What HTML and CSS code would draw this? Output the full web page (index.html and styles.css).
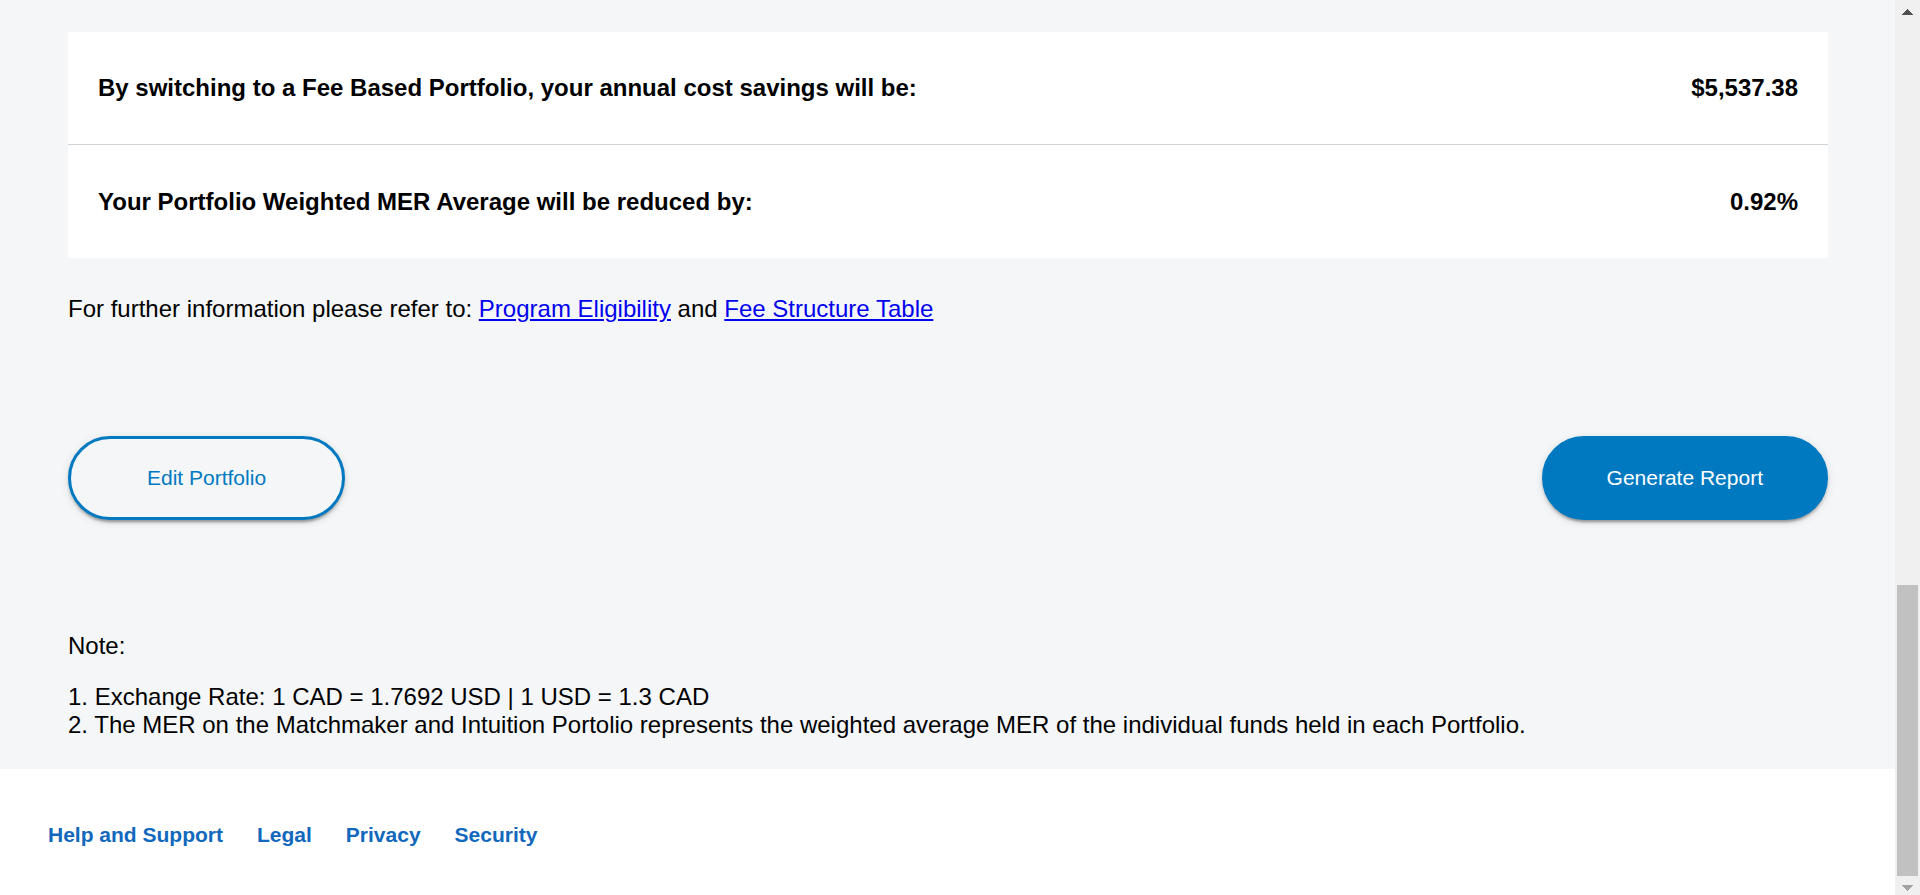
FILE: index.html
```html
<!DOCTYPE html>
<html lang="en">
<head>
<meta charset="utf-8">
<title>Portfolio Fee Comparison</title>
<link rel="stylesheet" href="styles.css">
</head>
<body>
<div class="viewport">
  <div class="page">
    <main class="content">
      <dl class="summary">
        <div class="summary-row">
          <dt>By switching to a Fee Based Portfolio, your annual cost savings will be:</dt>
          <dd>$5,537.38</dd>
        </div>
        <div class="summary-row">
          <dt>Your Portfolio Weighted MER Average will be reduced by:</dt>
          <dd>0.92%</dd>
        </div>
      </dl>
      <p class="info">For further information please refer to: <a href="#eligibility">Program Eligibility</a> and <a href="#fees">Fee Structure Table</a></p>
      <div class="actions">
        <button type="button" class="btn btn-outline">Edit Portfolio</button>
        <button type="button" class="btn btn-primary">Generate Report</button>
      </div>
      <section class="notes">
        <p>Note:</p>
        <p>1. Exchange Rate: 1 CAD = 1.7692 USD | 1 USD = 1.3 CAD<br>2. The MER on the Matchmaker and Intuition Portolio represents the weighted average MER of the individual funds held in each Portfolio.</p>
      </section>
    </main>
    <footer class="footer">
      <nav class="footer-nav">
        <a href="#help">Help and Support</a>
        <a href="#legal">Legal</a>
        <a href="#privacy">Privacy</a>
        <a href="#security">Security</a>
      </nav>
    </footer>
  </div>
  <div class="scrollbar" aria-hidden="true">
    <svg class="arrow arrow-up" viewBox="0 0 11 6" shape-rendering="crispEdges"><path d="M5 0h1v1h1v1h1v1h1v1h1v1h1v1H0V5h1V4h1V3h1V2h1V1h1z"/></svg>
    <div class="track"><div class="thumb"></div></div>
    <svg class="arrow arrow-down" viewBox="0 0 11 6" shape-rendering="crispEdges"><path d="M0 0h11v1h-1v1h-1v1h-1v1h-1v1h-1v1h-1V5h-1V4h-1V3h-1V2h-1V1h-1z"/></svg>
  </div>
</div>
</body>
</html>
```
FILE: styles.css
```css
* { box-sizing: border-box; }
body {
  margin: 0;
  background: #fff;
  color: #000;
  font-family: "Liberation Sans", Arial, sans-serif;
  font-size: 24px;
  line-height: 28px;
}
.viewport { display: flex; min-height: 100vh; }
.page { flex: 1; min-width: 0; display: flex; flex-direction: column; }
.content { padding: 32px 67px 30px 68px; background: #f4f6f8; }
.summary { margin: 0; background: #fff; }
.summary-row {
  display: flex;
  justify-content: space-between;
  gap: 24px;
  padding: 42px 30px;
  font-weight: bold;
}
.summary-row + .summary-row { padding-top: 43px; border-top: 1px solid #d0d2d3; }
.summary-row dd { margin: 0; }
.info { margin: 37px 0 0; }
.info a { color: #00e; }
.actions {
  display: flex;
  justify-content: space-between;
  margin-top: 113px;
}
.btn {
  height: 84px;
  border: 3px solid #0079c1;
  border-radius: 42px;
  font: 21px/24px "Liberation Sans", Arial, sans-serif;
  box-shadow: 0 5px 2px -3px rgba(0, 0, 0, 0.2), 0 3px 3px rgba(0, 0, 0, 0.14), 0 2px 8px rgba(0, 0, 0, 0.12);
}
.btn-outline { padding: 0 76px; background: #f4f6f8; color: #0079c1; }
.btn-primary { padding: 0 62px; background: #0079c1; color: #fff; }
.notes { margin-top: 112px; }
.notes p { margin: 0 0 23px; }
.notes p:last-child { margin: 0; }
.footer { padding: 52px 48px 46px; background: #fff; }
.footer-nav { display: flex; gap: 34px; }
.footer-nav a {
  color: #1168bd;
  font-size: 21px;
  line-height: 28px;
  font-weight: bold;
  text-decoration: none;
}
.scrollbar {
  position: sticky;
  top: 0;
  flex: none;
  display: flex;
  flex-direction: column;
  align-items: center;
  width: 25px;
  height: 100vh;
  padding: 9px 0 4px;
  background: #f0f0f0;
}
.arrow { display: block; width: 11px; height: 6px; }
.arrow-up { fill: #505050; }
.arrow-down { fill: #a3a3a3; }
.track {
  flex: 1;
  display: flex;
  flex-direction: column;
  justify-content: flex-end;
  width: 21px;
  margin: 5px 0 9px;
}
.thumb { height: 34%; background: #c1c1c1; }
```
